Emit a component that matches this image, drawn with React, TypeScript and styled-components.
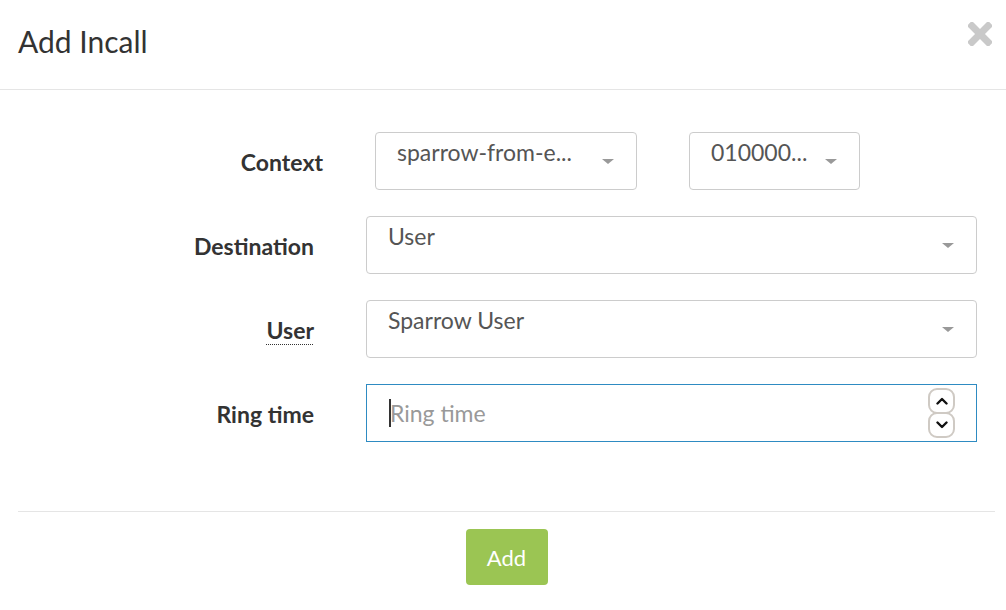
import React from 'react';
import styled, { createGlobalStyle } from 'styled-components';

const GlobalStyle = createGlobalStyle`
  html, body {
    margin: 0;
    padding: 0;
    background: #fff;
  }
  body {
    font-family: Lato, 'Open Sans', sans-serif;
    color: #333;
  }
  * {
    box-sizing: border-box;
  }
`;

const Modal = styled.div`
  width: 1006px;
  height: 610px;
  background: #fff;
  display: flex;
  flex-direction: column;
`;

const Header = styled.div`
  height: 90px;
  border-bottom: 1px solid #e5e5e5;
  display: flex;
  align-items: flex-start;
  justify-content: space-between;
  padding: 21px 14px 0 18px;
`;

const Title = styled.h4`
  margin: 0;
  font-size: 30px;
  font-weight: 400;
  line-height: 40px;
  color: #333;
`;

const Close = styled.button`
  border: 0;
  background: none;
  padding: 0;
  margin: 1px 0 0;
  width: 24px;
  height: 24px;
  cursor: pointer;
  display: flex;
`;

const Body = styled.div`
  padding: 42px 29px 69px 0;
  display: flex;
  flex-direction: column;
  gap: 26px;
`;

const Row = styled.div<{ $shift?: number }>`
  display: grid;
  grid-template-columns: 314px 1fr;
  column-gap: 52px;
  align-items: center;
  height: 58px;
  padding-left: ${(p) => p.$shift || 0}px;
`;

const Label = styled.label`
  text-align: right;
  font-size: 23px;
  font-weight: 700;
  color: #333;
  padding-top: 2px;
`;

const Abbr = styled.abbr`
  text-decoration: underline dotted;
  text-underline-offset: 5px;
  text-decoration-thickness: 1px;
  cursor: help;
`;

const Pair = styled.div`
  display: flex;
  gap: 52px;
`;

const Select = styled.div<{ $width?: number }>`
  position: relative;
  height: 58px;
  width: ${(p) => (p.$width ? `${p.$width}px` : '100%')};
  border: 1px solid #ccc;
  border-radius: 4px;
  padding: 5px 50px 0 21px;
  font-size: 23px;
  line-height: 28px;
  color: #555;
  white-space: nowrap;
  overflow: hidden;
  background: #fff;
`;

const Caret = styled.span`
  position: absolute;
  right: 22px;
  top: 26px;
  width: 0;
  height: 0;
  border-left: 6px solid transparent;
  border-right: 6px solid transparent;
  border-top: 5px solid #999;
`;

const NumberBox = styled.div`
  position: relative;
  height: 58px;
  border: 1px solid #2e8bc2;
  display: flex;
  align-items: center;
  padding-left: 22px;
  font-size: 23px;
  color: #999;
`;

const Cursor = styled.span`
  display: inline-block;
  width: 2px;
  height: 28px;
  background: #333;
  margin-right: -1px;
  vertical-align: middle;
`;

const Spinner = styled.div`
  position: absolute;
  right: 21px;
  top: 3px;
  display: flex;
  flex-direction: column;
`;

const SpinButton = styled.span`
  width: 27px;
  height: 26px;
  border: 2px solid #cfcac4;
  border-radius: 9px;
  display: flex;
  align-items: center;
  justify-content: center;
  background: #fff;
  & + & {
    margin-top: -2px;
  }
`;

const Footer = styled.div`
  margin: 0 11px 0 18px;
  border-top: 1px solid #e5e5e5;
  padding-top: 17px;
  display: flex;
  justify-content: center;
`;

const AddButton = styled.button`
  width: 82px;
  height: 56px;
  border: 0;
  border-radius: 4px;
  background: #9bc553;
  color: #fff;
  font-family: Lato, sans-serif;
  font-size: 22px;
  cursor: pointer;
`;

const Chevron = ({ up }: { up?: boolean }) => (
  <svg width="12" height="8" viewBox="0 0 12 8">
    <path
      d={up ? 'M1.5 6.5 L6 2 L10.5 6.5' : 'M1.5 1.5 L6 6 L10.5 1.5'}
      fill="none"
      stroke="#111"
      strokeWidth="2.4"
      strokeLinecap="round"
      strokeLinejoin="round"
    />
  </svg>
);

const App = () => {
  return (
    <Modal>
      <GlobalStyle />
      <Header>
        <Title>Add Incall</Title>
        <Close aria-label="Close">
          <svg width="24" height="24" viewBox="0 0 24 24">
            <g fill="#c9c9c9">
              <rect x="-3" y="8.5" width="30" height="7" rx="2" transform="rotate(45 12 12)" />
              <rect x="-3" y="8.5" width="30" height="7" rx="2" transform="rotate(-45 12 12)" />
            </g>
          </svg>
        </Close>
      </Header>
      <Body>
        <Row $shift={9}>
          <Label>Context</Label>
          <Pair>
            <Select $width={262}>
              sparrow-from-e...
              <Caret />
            </Select>
            <Select $width={171}>
              010000...
              <Caret />
            </Select>
          </Pair>
        </Row>
        <Row>
          <Label>Destination</Label>
          <Select>
            User
            <Caret />
          </Select>
        </Row>
        <Row>
          <Label>
            <Abbr title="User">User</Abbr>
          </Label>
          <Select>
            Sparrow User
            <Caret />
          </Select>
        </Row>
        <Row>
          <Label>Ring time</Label>
          <NumberBox>
            <Cursor />
            Ring time
            <Spinner>
              <SpinButton>
                <Chevron up />
              </SpinButton>
              <SpinButton>
                <Chevron />
              </SpinButton>
            </Spinner>
          </NumberBox>
        </Row>
      </Body>
      <Footer>
        <AddButton>Add</AddButton>
      </Footer>
    </Modal>
  );
};

export default App;
